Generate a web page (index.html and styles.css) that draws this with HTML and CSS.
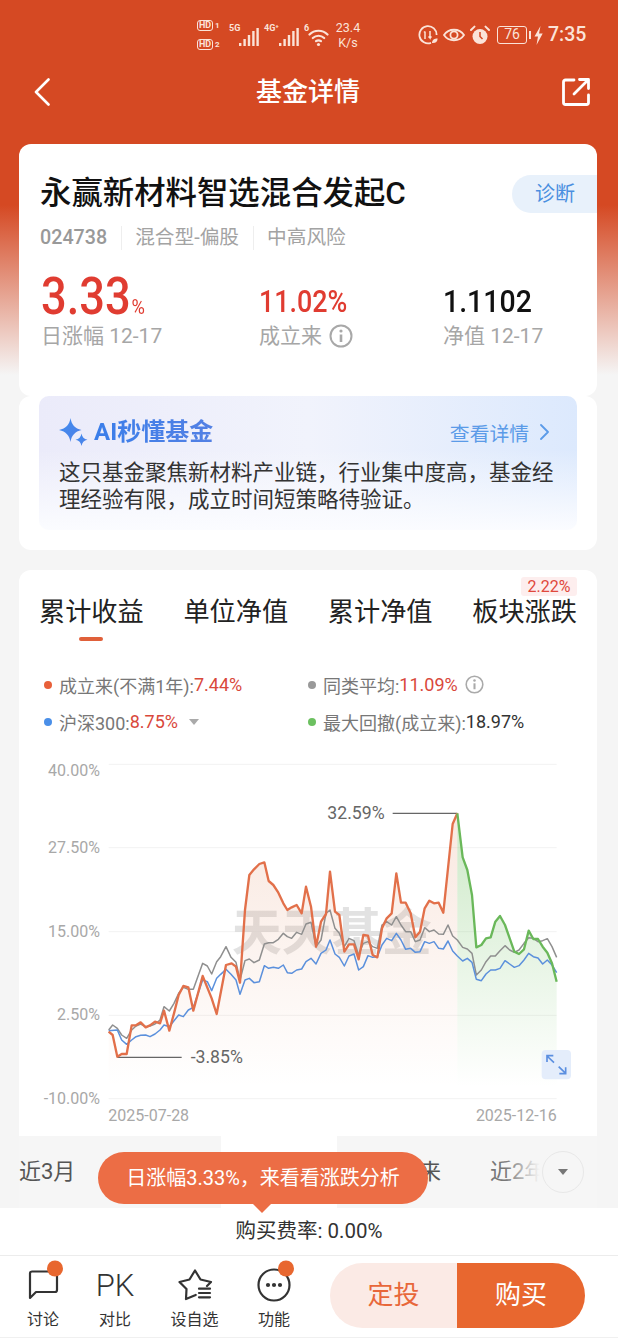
FILE: index.html
```html
<!DOCTYPE html>
<html lang="zh-CN">
<head>
    <meta charset="UTF-8">
    <meta name="viewport" content="width=device-width, initial-scale=1.0">
    <title>基金详情</title>
    <link rel="stylesheet" href="styles.css">
</head>
<body>
    <div class="page">
        <!-- status bar -->
        <div class="status-bar">
            <div class="hd-col">
                <div class="hd-row"><span class="hd-box">HD</span><span class="hd-num">1</span></div>
                <div class="hd-row"><span class="hd-box">HD</span><span class="hd-num">2</span></div>
            </div>
            <span class="net-tag net-5g">5G</span>
            <svg class="bars" width="20" height="19" viewBox="0 0 20 19"><g fill="#fbe3d8"><rect x="0" y="15" width="2.4" height="3"/><rect x="4.4" y="11" width="2.4" height="7"/><rect x="8.8" y="7" width="2.4" height="11"/><rect x="13.2" y="3" width="2.4" height="15"/><rect x="17.4" y="0" width="2.4" height="18"/></g></svg>
            <span class="net-tag net-4g">4G⁺</span>
            <svg class="bars" width="20" height="19" viewBox="0 0 20 19"><g fill="#fbe3d8"><rect x="0" y="15" width="2.4" height="3"/><rect x="4.4" y="11" width="2.4" height="7"/><rect x="8.8" y="7" width="2.4" height="11"/><rect x="13.2" y="3" width="2.4" height="15"/><rect x="17.4" y="0" width="2.4" height="18"/></g></svg>
            <span class="net-tag net-6">6</span>
            <svg class="wifi" width="22" height="19" viewBox="0 0 22 19" fill="none" stroke="#fbe3d8" stroke-width="2.2" stroke-linecap="round"><path d="M1.5 6.5C6.5 1.5 14.5 1.5 19.5 6.5"/><path d="M4.8 10C8 7 13 7 16.2 10"/><path d="M8 13.2C9.6 12 11.4 12 13 13.2"/><circle cx="10.5" cy="16.5" r="1.6" fill="#fbe3d8" stroke="none"/></svg>
            <div class="speed"><span>23.4</span><span>K/s</span></div>
            <svg class="st-icon st-first" width="20" height="20" viewBox="0 0 20 20" fill="none" stroke="#fbe3d8" stroke-width="1.8"><path d="M13 17.8A8.6 8.6 0 1 1 18.6 10"/><path d="M7 6.5V14M6 7.5L7 6.5M12 6V13L10.5 11.5M12 13L13.5 11.5" stroke-width="1.5"/><path d="M14 18C14 14.8 16.4 13.4 19.6 13.4C19.6 16.6 17.4 18.4 14 18Z" fill="#fbe3d8" stroke="none"/></svg>
            <svg class="st-icon st-eye" width="22" height="18" viewBox="0 0 22 18" fill="none" stroke="#fbe3d8" stroke-width="1.8"><path d="M1 9C5.5 2 16.5 2 21 9C16.5 16 5.5 16 1 9Z"/><circle cx="11" cy="9" r="3.6"/></svg>
            <svg class="st-icon st-alarm" width="20" height="20" viewBox="0 0 20 20"><circle cx="10" cy="11.5" r="7.5" fill="#fbe3d8"/><path d="M1 5L4.5 1.6M19 5L15.5 1.6" stroke="#fbe3d8" stroke-width="2" stroke-linecap="round"/><path d="M10 7V11.5L12.5 14" stroke="#d54923" stroke-width="1.5" fill="none"/></svg>
            <div class="battery"><span class="battery-body">76</span><span class="battery-cap"></span></div>
            <svg class="st-icon st-bolt" width="9" height="19" viewBox="0 0 9 19"><path d="M6.5 0L0.5 10.5H4L2.5 19L8.7 7.5H5Z" fill="#fbe3d8"/></svg>
            <span class="clock">7:35</span>
        </div>

        <!-- nav bar -->
        <div class="nav-bar">
            <svg class="nav-icon" width="16" height="28" viewBox="0 0 16 28" fill="none" stroke="#fff" stroke-width="2.6" stroke-linecap="round" stroke-linejoin="round"><path d="M14.5 1.5L2 14L14.5 26.5"/></svg>
            <div class="nav-title">基金详情</div>
            <svg class="nav-icon" width="28" height="28" viewBox="0 0 28 28" fill="none" stroke="#fff" stroke-width="2.8" stroke-linecap="round" stroke-linejoin="round"><path d="M12 2H3.5A2 2 0 0 0 1.5 4V24.5A2 2 0 0 0 3.5 26.5H24.5A2 2 0 0 0 26.5 24.5V17"/><path d="M12 16L26 2M17.5 1.5H26.5V10.5"/></svg>
        </div>

        <!-- fund summary -->
        <div class="card summary-card">
            <div class="fund-head">
                <h1 class="fund-name">永赢新材料智选混合发起C</h1>
                <div class="diagnose-tag">诊断</div>
            </div>
            <div class="fund-meta">
                <span class="fund-code">024738</span>
                <span class="meta-item">混合型-偏股</span>
                <span class="meta-item">中高风险</span>
            </div>
            <div class="stats">
                <div class="stat">
                    <div class="stat-value big-value">3.33<small>%</small></div>
                    <div class="stat-label">日涨幅 12-17</div>
                </div>
                <div class="stat">
                    <div class="stat-value red-value">11.02%</div>
                    <div class="stat-label">成立来
                        <svg class="info-icon" width="24" height="24" viewBox="0 0 24 24" fill="none" stroke="#a8a8a8" stroke-width="2"><circle cx="12" cy="12" r="10.5"/><path d="M12 10.5V18" stroke-width="2.6"/><circle cx="12" cy="7" r="1.6" fill="#a8a8a8" stroke="none"/></svg>
                    </div>
                </div>
                <div class="stat">
                    <div class="stat-value black-value">1.1102</div>
                    <div class="stat-label">净值 12-17</div>
                </div>
            </div>
        </div>

        <!-- AI summary -->
        <div class="card ai-card">
            <div class="ai-box">
                <div class="ai-head">
                    <svg class="ai-star" width="30" height="28" viewBox="0 0 30 28"><defs><linearGradient id="starFill" x1="0" y1="0" x2="1" y2="1"><stop offset="0" stop-color="#3f8df0"/><stop offset="1" stop-color="#4f7fe6"/></linearGradient></defs><path d="M11.5 0C12.5 6.5 16 10.5 22.5 12C16 13.5 12.5 17.5 11.5 24C10.5 17.5 7 13.5 0 12C7 10.5 10.5 6.5 11.5 0Z" fill="url(#starFill)"/><path d="M22.5 15.5C23 19 25 21 28.5 21.7C25 22.4 23 24.4 22.5 28C22 24.4 20 22.4 16.5 21.7C20 21 22 19 22.5 15.5Z" fill="url(#starFill)"/></svg>
                    <span class="ai-title">AI秒懂基金</span>
                    <span class="ai-more">查看详情</span>
                    <svg class="ai-chevron" width="9" height="16" viewBox="0 0 9 16" fill="none" stroke="#5b9be8" stroke-width="1.8" stroke-linecap="round" stroke-linejoin="round"><path d="M1 1L8 8L1 15"/></svg>
                </div>
                <p class="ai-text">这只基金聚焦新材料产业链，行业集中度高，基金经理经验有限，成立时间短策略待验证。</p>
            </div>
        </div>

        <!-- chart -->
        <div class="card chart-card">
            <div class="chart-tabs">
                <span class="chart-tab active">累计收益</span>
                <span class="chart-tab">单位净值</span>
                <span class="chart-tab">累计净值</span>
                <span class="chart-tab">板块涨跌<em class="tab-badge">2.22%</em></span>
            </div>
            <div class="legend">
                <div class="legend-item"><i class="dot dot-orange"></i>成立来(不满1年):<b>7.44%</b></div>
                <div class="legend-item"><i class="dot dot-gray"></i>同类平均:<b>11.09%</b>
                    <svg class="legend-info" width="19" height="19" viewBox="0 0 24 24" fill="none" stroke="#aaa" stroke-width="2"><circle cx="12" cy="12" r="10.5"/><path d="M12 10.5V18" stroke-width="2.6"/><circle cx="12" cy="7" r="1.6" fill="#aaa" stroke="none"/></svg>
                </div>
                <div class="legend-item"><i class="dot dot-blue"></i>沪深300:<b>8.75%</b><span class="caret"></span></div>
                <div class="legend-item"><i class="dot dot-green"></i>最大回撤(成立来):<span class="legend-dark">18.97%</span></div>
            </div>
            <svg class="chart" width="570" height="380" viewBox="0 0 1710 1140">
                <defs>
                    <linearGradient id="fillOrange" gradientUnits="userSpaceOnUse" x1="0" y1="190" x2="0" y2="1010"><stop offset="0" stop-color="#e08a60" stop-opacity=".2"/><stop offset="1" stop-color="#e08a60" stop-opacity="0"/></linearGradient>
                    <linearGradient id="fillGreen" gradientUnits="userSpaceOnUse" x1="0" y1="190" x2="0" y2="1010"><stop offset="0" stop-color="#6abe5a" stop-opacity=".34"/><stop offset="1" stop-color="#6abe5a" stop-opacity="0"/></linearGradient>
                </defs>
                <g class="grid-lines">
                    <path d="M236 43H1580M236 293H1580M236 545H1580M236 796H1580M236 1046H1580"/>
                </g>
                <g class="axis-text" text-anchor="end">
                    <text x="210" y="78">40.00%</text>
                    <text x="210" y="308">27.50%</text>
                    <text x="210" y="560">15.00%</text>
                    <text x="210" y="811">2.50%</text>
                    <text x="210" y="1061">-10.00%</text>
                </g>
                <g class="axis-text">
                    <text x="235" y="1112">2025-07-28</text>
                    <text x="1580" y="1112" text-anchor="end">2025-12-16</text>
                </g>
                <text class="watermark" x="605" y="600">天天基金</text>
                <polygon fill="url(#fillOrange)" points="236,845 248,855 262,920 275,912 290,912 305,826 318,826 332,817 347,832 360,826 375,815 390,820 402,782 418,842 432,790 446,735 460,708 475,712 490,782 518,678 545,745 560,792 588,645 605,640 618,650 630,698 645,480 658,375 672,358 688,342 703,337 716,393 730,405 745,428 760,460 772,480 785,472 800,465 815,490 828,410 843,470 858,590 873,515 888,492 900,365 915,485 928,495 943,605 957,583 972,583 986,628 1000,555 1014,557 1028,615 1042,622 1056,535 1070,505 1085,490 1099,370 1113,458 1127,458 1142,490 1156,562 1170,545 1184,475 1198,452 1212,460 1226,458 1240,488 1268,222 1282,190 1282,1010 236,1010"/>
                <polygon fill="url(#fillGreen)" points="1282,190 1298,322 1312,360 1326,435 1339,592 1354,585 1368,565 1382,562 1396,515 1410,498 1425,525 1453,605 1467,612 1482,598 1496,542 1510,567 1524,567 1538,590 1552,608 1566,640 1580,695 1580,1010 1282,1010"/>
                <polyline class="line line-gray" points="236,840 248,825 262,835 275,855 290,865 305,840 318,828 332,822 347,830 360,828 375,822 390,810 402,770 418,783 432,760 446,730 460,712 475,718 490,718 518,640 532,648 545,672 560,635 572,620 588,590 603,622 618,637 630,690 645,632 658,627 672,638 688,630 703,582 716,578 730,578 745,568 760,550 772,560 785,565 800,547 815,553 828,522 843,517 858,590 873,570 888,490 900,480 915,535 928,550 943,590 957,565 972,572 986,615 1000,580 1014,575 1028,590 1042,595 1056,525 1070,515 1085,525 1099,500 1113,525 1127,545 1142,545 1156,575 1170,570 1184,533 1198,545 1212,540 1226,552 1240,553 1254,525 1268,558 1282,570 1298,592 1312,597 1326,610 1339,675 1354,660 1368,635 1382,618 1396,618 1410,602 1425,587 1439,600 1453,607 1467,600 1482,580 1496,563 1510,565 1524,575 1538,572 1552,566 1566,590 1580,622"/>
                <polyline class="line line-blue" points="236,842 262,840 275,870 290,883 305,870 318,860 332,856 347,855 360,860 375,852 390,840 402,825 418,830 432,812 446,795 460,800 475,780 490,772 518,690 532,695 545,722 560,685 572,673 588,658 603,673 618,690 630,733 645,690 658,685 672,698 688,695 703,647 716,655 730,652 745,655 760,645 772,668 785,670 800,660 815,657 828,635 843,625 858,642 873,610 888,600 900,570 915,612 928,622 943,648 957,618 972,612 986,660 1000,650 1014,617 1028,622 1042,620 1056,585 1070,565 1085,572 1099,550 1113,570 1127,598 1142,595 1156,607 1170,605 1184,575 1198,580 1212,575 1226,595 1240,597 1254,573 1268,603 1282,618 1298,633 1312,625 1326,637 1339,688 1354,692 1368,672 1382,660 1396,660 1410,655 1425,632 1439,642 1453,652 1467,647 1482,630 1496,610 1510,620 1524,624 1538,642 1552,630 1566,645 1580,668"/>
                <path class="leader" d="M262 922H455M1088 190H1282"/>
                <polyline class="line line-orange" points="236,845 248,855 262,920 275,912 290,912 305,826 318,826 332,817 347,832 360,826 375,815 390,820 402,782 418,842 432,790 446,735 460,708 475,712 490,782 518,678 545,745 560,792 588,645 605,640 618,650 630,698 645,480 658,375 672,358 688,342 703,337 716,393 730,405 745,428 760,460 772,480 785,472 800,465 815,490 828,410 843,470 858,590 873,515 888,492 900,365 915,485 928,495 943,605 957,583 972,583 986,628 1000,555 1014,557 1028,615 1042,622 1056,535 1070,505 1085,490 1099,370 1113,458 1127,458 1142,490 1156,562 1170,545 1184,475 1198,452 1212,460 1226,458 1240,488 1268,222 1282,190"/>
                <polyline class="line line-green" points="1282,190 1298,322 1312,360 1326,435 1339,592 1354,585 1368,565 1382,562 1396,515 1410,498 1425,525 1453,605 1467,612 1482,598 1496,542 1510,567 1524,567 1538,590 1552,608 1566,640 1580,695"/>
                <text class="point-label" x="482" y="938">-3.85%</text>
                <text class="point-label" x="892" y="206">32.59%</text>
                <rect x="1535" y="900" width="88" height="88" rx="12" fill="#e4edfb"/>
                <path d="M1551 918L1572 938M1551 936V917H1570M1607 970L1586 950M1607 952V971H1588" fill="none" stroke="#5b8fe0" stroke-width="5"/>
            </svg>
        </div>

        <!-- period strip -->
        <div class="period-strip">
            <span class="period period-first">近3月</span>
            <span class="period"></span>
            <span class="period period-active"></span>
            <span class="period period-wide">今年来</span>
            <span class="period period-last">近2年</span>
            <div class="period-fade"></div>
            <div class="period-more"><span class="caret caret-dark"></span></div>
        </div>

        <div class="fee-row">购买费率: 0.00%</div>

        <!-- bottom bar -->
        <div class="bottom-bar">
            <div class="tool tool-a">
                <svg width="42" height="42" viewBox="0 0 42 42" fill="none" stroke="#333" stroke-width="2.2" stroke-linejoin="round"><path d="M27 7.5H10A2 2 0 0 0 8 9.5V34L14 28H33A2 2 0 0 0 35 26V12"/><circle cx="33" cy="4.5" r="8" fill="#e8672f" stroke="none"/></svg>
                <span>讨论</span>
            </div>
            <div class="tool tool-a">
                <div class="pk-mark">PK</div>
                <span>对比</span>
            </div>
            <div class="tool tool-b">
                <svg width="42" height="42" viewBox="0 0 42 42" fill="none" stroke="#333" stroke-width="2.2" stroke-linecap="round" stroke-linejoin="round"><path d="M21.7 31L12 35L12.5 25L5.5 18L15.5 15.5L21 6.5L26.5 15.5L37 18L33 22"/><path d="M25 24.7H36M25 29H36M25 33.3H36"/></svg>
                <span>设自选</span>
            </div>
            <div class="tool tool-a">
                <svg width="42" height="42" viewBox="0 0 42 42" fill="none" stroke="#333" stroke-width="2.2"><circle cx="21" cy="21" r="15.5"/><g fill="#333" stroke="none"><circle cx="15" cy="21" r="2.1"/><circle cx="21" cy="21" r="2.1"/><circle cx="27" cy="21" r="2.1"/></g><circle cx="33" cy="4.5" r="8" fill="#e8672f" stroke="none"/></svg>
                <span>功能</span>
            </div>
            <div class="trade-btns">
                <div class="trade-btn btn-plan">定投</div>
                <div class="trade-btn btn-buy">购买</div>
            </div>
        </div>

        <!-- tooltip over the strip -->
        <div class="bubble">日涨幅3.33%，来看看涨跌分析</div>
    </div>
</body>
</html>
```

FILE: styles.css
```css
* {
    box-sizing: border-box;
}

body {
    margin: 0;
    font-family: Roboto, "Noto Sans CJK SC", sans-serif;
    color: #333;
}

.page {
    position: relative;
    width: 618px;
    height: 1338px;
    overflow: hidden;
    background: linear-gradient(#d54923 0, #d54923 205px, #f5f5f5 375px);
}

/* status bar */
.status-bar {
    display: flex;
    align-items: center;
    height: 42px;
    margin-top: 14px;
    padding-left: 197px;
    color: #fbe3d8;
}

.hd-col {
    display: flex;
    flex-direction: column;
    gap: 8px;
    width: 32px;
}

.hd-row {
    display: flex;
    align-items: center;
    gap: 2px;
}

.hd-box {
    width: 16px;
    height: 11px;
    border: 1.5px solid #fbe3d8;
    border-radius: 3px;
    font-size: 9px;
    font-weight: 700;
    line-height: 8px;
    text-align: center;
}

.hd-num {
    font-size: 8px;
    font-weight: 700;
    line-height: 9px;
}

.net-tag {
    align-self: flex-start;
    margin-top: 8px;
    font-size: 9px;
    font-weight: 700;
    line-height: 12px;
}

.net-5g {
    width: 10px;
}

.net-4g {
    width: 15px;
    margin-left: 5px;
    white-space: nowrap;
}

.net-6 {
    width: 8px;
    margin-left: 5px;
}

.bars {
    margin-top: 5px;
}

.wifi {
    margin-top: 5px;
    margin-left: -4px;
}

.speed {
    display: flex;
    flex-direction: column;
    align-items: center;
    width: 26px;
    margin-left: 5px;
    font-size: 12.5px;
    line-height: 15px;
}

.st-first {
    margin-left: 57px;
}

.st-eye {
    margin-left: 5px;
}

.st-alarm {
    margin-left: 5px;
}

.battery {
    display: flex;
    align-items: center;
    margin-left: 7px;
}

.battery-body {
    width: 30px;
    height: 18px;
    border: 1.5px solid #fbe3d8;
    border-radius: 3px;
    font-size: 14px;
    line-height: 15px;
    text-align: center;
}

.battery-cap {
    width: 2px;
    height: 8px;
    margin-left: 2px;
    background: #fbe3d8;
}

.st-bolt {
    margin-left: 3px;
}

.clock {
    margin-left: 5px;
    font-size: 19.5px;
    font-weight: 500;
    line-height: 24px;
}

/* nav bar */
.nav-bar {
    display: flex;
    align-items: center;
    justify-content: space-between;
    height: 44px;
    margin-top: 14px;
    padding: 0 28px 0 34px;
}

.nav-title {
    margin-left: 4px;
    color: #fff;
    font-size: 26px;
    font-weight: 500;
    line-height: 44px;
}

/* cards */
.card {
    margin: 0 21px 0 19px;
    background: #fff;
    border-radius: 12px;
}

.summary-card {
    height: 252px;
    margin-top: 30px;
    padding-top: 30px;
}

.fund-head {
    display: flex;
    align-items: center;
    justify-content: space-between;
    padding-left: 21px;
}

.fund-name {
    margin: 0;
    color: #111;
    font-size: 31.4px;
    font-weight: 500;
    line-height: 40px;
    white-space: nowrap;
}

.diagnose-tag {
    width: 85px;
    height: 38px;
    padding-left: 23px;
    background: #e8f1fb;
    border-radius: 19px 0 0 19px;
    color: #4a8fe0;
    font-size: 20px;
    line-height: 38px;
}

.fund-meta {
    display: flex;
    align-items: center;
    height: 24px;
    margin-top: 12px;
    padding-left: 21px;
    color: #a3a3a3;
    font-size: 19.7px;
    line-height: 24px;
}

.fund-code {
    font-weight: 500;
    color: #999;
}

.meta-item {
    margin-left: 14px;
    padding-left: 13px;
    border-left: 1px solid #eee;
}

.stats {
    display: grid;
    grid-template-columns: 218px 184px 1fr;
    margin-top: 22px;
    padding-left: 22px;
}

.stat-value {
    height: 50px;
    font-weight: 500;
    white-space: nowrap;
    transform-origin: left center;
}

.big-value {
    color: #e03c31;
    font-size: 52px;
    line-height: 50px;
    transform: scaleX(0.87);
}

.big-value small {
    margin-left: 1px;
    font-size: 21px;
    font-weight: 400;
}

.red-value {
    padding-top: 9px;
    color: #e03c31;
    font-size: 32px;
    line-height: 41px;
    transform: scaleX(0.84);
}

.black-value {
    padding-top: 9px;
    color: #111;
    font-size: 32px;
    line-height: 41px;
    transform: scaleX(0.89);
}

.stat-label {
    display: flex;
    align-items: center;
    gap: 7px;
    color: #a6a6a6;
    font-size: 21px;
    line-height: 28px;
}

/* AI box */
.ai-card {
    height: 154px;
    padding: 0 20px;
}

.ai-box {
    height: 134px;
    padding: 22px 20px;
    background: linear-gradient(180deg, rgba(255, 255, 255, 0) 40%, #fbfcff 100%), linear-gradient(90deg, #ebebfa, #f1f3fc 50%, #dce9fd);
    border-radius: 10px;
}

.ai-head {
    display: flex;
    align-items: center;
    height: 28px;
}

.ai-star {
    margin-right: 5px;
}

.ai-title {
    flex: 1;
    background: linear-gradient(90deg, #3a7eea, #8585d8);
    -webkit-background-clip: text;
    background-clip: text;
    color: transparent;
    font-size: 24px;
    font-weight: 700;
    line-height: 28px;
}

.ai-more {
    color: #5b9be8;
    font-size: 19.8px;
}

.ai-chevron {
    margin: 0 8px 0 11px;
}

.ai-text {
    margin: 13px 0 0;
    color: #333;
    font-size: 21.5px;
    line-height: 27px;
}

/* chart card */
.chart-card {
    height: 566px;
    margin-top: 20px;
    border-radius: 12px 12px 0 0;
}

.chart-tabs {
    display: flex;
    justify-content: space-between;
    padding: 24px 20px 0;
}

.chart-tab {
    position: relative;
    color: #222;
    font-size: 26.2px;
    line-height: 36px;
}

.chart-tab.active::after {
    content: "";
    position: absolute;
    left: 40px;
    bottom: -11px;
    width: 24px;
    height: 4px;
    background: #e0603a;
    border-radius: 2px;
}

.tab-badge {
    position: absolute;
    top: -17px;
    right: 0;
    width: 56px;
    height: 19px;
    background: #fdeeee;
    border-radius: 3px;
    color: #e0483c;
    font-size: 16px;
    font-style: normal;
    line-height: 19px;
    text-align: center;
}

.legend {
    display: grid;
    grid-template-columns: 264px 1fr;
    grid-auto-rows: 37px;
    margin-top: 36px;
    padding-left: 25px;
}

.legend-item {
    display: flex;
    align-items: center;
    color: #777;
    font-size: 18px;
    white-space: nowrap;
}

.legend-item b {
    color: #d9483b;
    font-weight: 400;
}

.legend-dark {
    color: #333;
}

.dot {
    width: 8px;
    height: 8px;
    margin-right: 7px;
    border-radius: 50%;
}

.dot-orange {
    background: #e8603a;
}

.dot-gray {
    background: #999;
}

.dot-blue {
    background: #4a8fe8;
}

.dot-green {
    background: #6cc060;
}

.legend-info {
    margin-left: 7px;
}

.caret {
    width: 0;
    height: 0;
    margin-left: 11px;
    border-left: 5px solid transparent;
    border-right: 5px solid transparent;
    border-top: 6px solid #aaa;
}

.chart {
    display: block;
    margin: 10px 0 0 11px;
}

.grid-lines path {
    fill: none;
    stroke: #f2f2f2;
    stroke-width: 3;
}

.axis-text text {
    fill: #a8a8a8;
    font-size: 48px;
}

.watermark {
    fill: #d8d8d8;
    fill-opacity: 0.75;
    font-size: 150px;
    font-weight: 700;
}

.line {
    fill: none;
    stroke-linejoin: round;
}

.line-gray {
    stroke: #8f8f8f;
    stroke-width: 4.5;
}

.line-blue {
    stroke: #5b90dc;
    stroke-width: 4.5;
}

.line-orange {
    stroke: #e2704a;
    stroke-width: 7;
}

.line-green {
    stroke: #6ab85a;
    stroke-width: 7;
}

.leader {
    fill: none;
    stroke: #666;
    stroke-width: 4;
}

.point-label {
    fill: #666;
    font-size: 53px;
}

/* period strip */
.period-strip {
    position: relative;
    display: flex;
    height: 72px;
    margin: 0 21px 0 19px;
    background: #f6f6f6;
    overflow: hidden;
}

.period {
    flex: none;
    width: 116px;
    color: #555;
    font-size: 22px;
    line-height: 72px;
    text-align: center;
}

.period-first {
    width: 86px;
    text-align: left;
}

.period-active {
    background: #fff;
}

.period-wide {
    width: 142px;
}

.period-last {
    width: 84px;
    padding-left: 11px;
    color: #777;
    text-align: left;
}

.period-fade {
    position: absolute;
    top: 0;
    right: 0;
    width: 92px;
    height: 100%;
    background: linear-gradient(90deg, rgba(246, 246, 246, 0), #f6f6f6 38%);
}

.period-more {
    position: absolute;
    top: 15px;
    right: 13px;
    display: flex;
    align-items: center;
    justify-content: center;
    width: 42px;
    height: 42px;
    border: 1px solid #e8e8e8;
    border-radius: 50%;
}

.caret-dark {
    margin: 0;
    border-top-color: #777;
}

/* fee + bottom */
.fee-row {
    height: 48px;
    background: #fff;
    border-bottom: 1px solid #ececec;
    color: #333;
    font-size: 20.5px;
    line-height: 47px;
    text-align: center;
}

.bottom-bar {
    display: flex;
    height: 82px;
    padding: 8px 0 0 7px;
    background: #fff;
    border-bottom: 1px solid #f0f0f0;
}

.tool {
    display: flex;
    flex-direction: column;
    align-items: center;
    height: 67px;
}

.tool svg {
    overflow: visible;
}

.tool-a {
    width: 72px;
}

.tool-b {
    width: 87px;
}

.tool span {
    margin-top: 3px;
    color: #333;
    font-size: 16px;
    line-height: 22px;
}

.pk-mark {
    height: 42px;
    color: #333;
    font-size: 31px;
    font-weight: 300;
    line-height: 44px;
}

.trade-btns {
    display: flex;
    width: 255px;
    height: 65px;
    margin: -1px 0 0 20px;
    border-radius: 33px;
    overflow: hidden;
}

.trade-btn {
    font-size: 26px;
    line-height: 65px;
    text-align: center;
}

.btn-plan {
    width: 127px;
    background: #fbeae5;
    color: #e8673a;
}

.btn-buy {
    flex: 1;
    background: #e8672f;
    color: #fff;
}

.bubble {
    position: absolute;
    top: 1152px;
    left: 98px;
    width: 330px;
    height: 52px;
    background: #ec6d45;
    border-radius: 26px;
    color: #fff;
    font-size: 20px;
    line-height: 52px;
    text-align: center;
}

.bubble::after {
    content: "";
    position: absolute;
    left: 155px;
    bottom: -9px;
    border-left: 9px solid transparent;
    border-right: 9px solid transparent;
    border-top: 9px solid #ec6d45;
}
```
